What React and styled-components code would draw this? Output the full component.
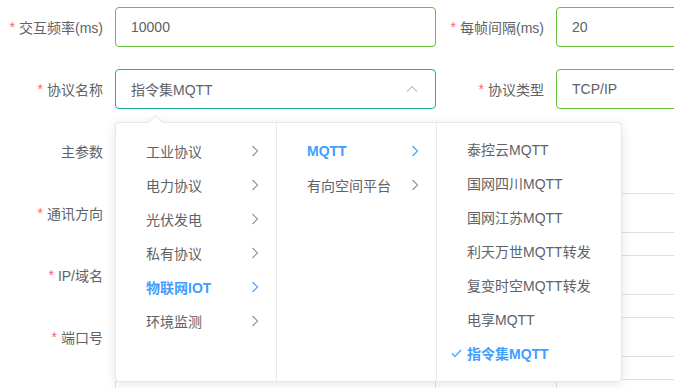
import React from 'react';
import styled, { createGlobalStyle } from 'styled-components';

const GlobalStyle = createGlobalStyle`
  html, body {
    margin: 0;
    padding: 0;
    background: #fff;
    overflow: hidden;
  }
  body {
    font-family: "Liberation Sans", "Noto Sans CJK SC", sans-serif;
    font-size: 14px;
    color: #606266;
  }
`;

const colors = {
  text: '#606266',
  success: '#67c23a',
  focus: '#1fb0a0',
  border: '#dcdfe6',
  primary: '#409eff',
  danger: '#f56c6c',
  icon: '#c0c4cc',
};

const rows = [
  {
    left: { label: '交互频率(ms)', required: true, value: '10000', state: 'success' },
    right: { label: '每帧间隔(ms)', required: true, value: '20', state: 'success' },
  },
  {
    left: { label: '协议名称', required: true, value: '指令集MQTT', state: 'focus', select: true },
    right: { label: '协议类型', required: true, value: 'TCP/IP', state: 'success' },
  },
  { left: { label: '主参数', value: '' } },
  { left: { label: '通讯方向', required: true, value: '' }, right: { label: '', value: '' } },
  { left: { label: 'IP/域名', required: true, value: '' }, right: { label: '', value: '' } },
  { left: { label: '端口号', required: true, value: '' }, right: { label: '', value: '' } },
  { left: { label: '', value: '' }, right: { label: '', value: '' } },
];

const menus = [
  {
    width: 161,
    padTop: 11,
    items: [
      { text: '工业协议', arrow: true },
      { text: '电力协议', arrow: true },
      { text: '光伏发电', arrow: true },
      { text: '私有协议', arrow: true },
      { text: '物联网IOT', arrow: true, active: true },
      { text: '环境监测', arrow: true },
    ],
  },
  {
    width: 160,
    padTop: 11,
    items: [
      { text: 'MQTT', arrow: true, active: true },
      { text: '有向空间平台', arrow: true },
    ],
  },
  {
    width: 184,
    padTop: 9,
    items: [
      { text: '泰控云MQTT' },
      { text: '国网四川MQTT' },
      { text: '国网江苏MQTT' },
      { text: '利天万世MQTT转发' },
      { text: '复变时空MQTT转发' },
      { text: '电享MQTT' },
      { text: '指令集MQTT', active: true, checked: true },
    ],
  },
];

const ChevronRight = ({ color }) => (
  <svg width="8" height="12" viewBox="0 0 8 12" fill="none">
    <path d="M1.5 1 L6.5 6 L1.5 11" stroke={color} strokeWidth="1.1" />
  </svg>
);

const ChevronUp = () => (
  <svg width="12" height="8" viewBox="0 0 12 8" fill="none">
    <path d="M1 6.5 L6 1.5 L11 6.5" stroke={colors.icon} strokeWidth="1.1" />
  </svg>
);

const Check = () => (
  <svg width="11" height="9" viewBox="0 0 11 9" fill="none">
    <path d="M1 4.5 L4 7.5 L10 1" stroke={colors.primary} strokeWidth="1.2" />
  </svg>
);

function Field({ item }) {
  if (!item) return <><Label /><span /></>;
  return (
    <>
      <Label>
        {item.required && <Star>*</Star>}
        {item.label}
      </Label>
      <InputWrap>
        <Input state={item.state}>
          <span>{item.value}</span>
          {item.select && <ChevronUp />}
        </Input>
        {item.select && <Cascader />}
      </InputWrap>
    </>
  );
}

function Cascader() {
  return (
    <Popper>
      <PopArrow />
      {menus.map((menu, i) => (
        <Menu key={i} width={menu.width} padTop={menu.padTop}>
          {menu.items.map(item => (
            <MenuItem key={item.text} active={item.active}>
              <CheckSlot>{item.checked && <Check />}</CheckSlot>
              <span className="label">{item.text}</span>
              {item.arrow && <ChevronRight color={item.active ? colors.primary : '#909399'} />}
            </MenuItem>
          ))}
        </Menu>
      ))}
    </Popper>
  );
}

export default function App() {
  return (
    <>
      <GlobalStyle />
      <Form>
        {rows.map((row, i) => (
          <React.Fragment key={i}>
            <Field item={row.left} />
            <Field item={row.right} />
          </React.Fragment>
        ))}
      </Form>
    </>
  );
}

const Form = styled.div`
  display: grid;
  grid-template-columns: 115px 321px 120px 321px;
  grid-auto-rows: 40px;
  row-gap: 22px;
  padding-top: 7px;
  width: 900px;
`;

const Label = styled.div`
  display: flex;
  align-items: center;
  justify-content: flex-end;
  padding-right: 12px;
  color: ${colors.text};
  font-size: 14px;
  white-space: nowrap;
`;

const Star = styled.span`
  color: ${colors.danger};
  margin-right: 4px;
`;

const InputWrap = styled.div`
  position: relative;
`;

const Input = styled.div`
  box-sizing: border-box;
  height: 40px;
  display: flex;
  align-items: center;
  justify-content: space-between;
  padding: 0 17px 0 15px;
  border: 1px solid
    ${p => (p.state === 'success' ? colors.success : p.state === 'focus' ? colors.focus : colors.border)};
  border-radius: 4px;
  color: ${colors.text};
  font-size: 14px;
`;

const Popper = styled.div`
  position: absolute;
  left: 0;
  top: 53px;
  z-index: 10;
  display: flex;
  height: 260px;
  background: #fff;
  border: 1px solid #e4e7ed;
  border-radius: 4px;
  box-shadow: 0 2px 12px 0 rgba(0, 0, 0, 0.1);
  box-sizing: border-box;
`;

const PopArrow = styled.div`
  position: absolute;
  top: -6px;
  left: 34px;
  width: 10px;
  height: 10px;
  background: #fff;
  border-left: 1px solid #e4e7ed;
  border-top: 1px solid #e4e7ed;
  transform: rotate(45deg);
`;

const Menu = styled.ul`
  list-style: none;
  margin: 0;
  padding: ${p => p.padTop}px 0 0;
  width: ${p => p.width}px;
  box-sizing: border-box;
  border-right: 1px solid #e4e7ed;

  &:last-child {
    border-right: none;
  }
`;

const MenuItem = styled.li`
  display: flex;
  align-items: center;
  height: 34px;
  padding: 0 17px 0 14px;
  font-size: 14px;
  color: ${p => (p.active ? colors.primary : colors.text)};
  font-weight: ${p => (p.active ? 700 : 400)};

  .label {
    flex: 1;
    white-space: nowrap;
  }
`;

const CheckSlot = styled.span`
  display: inline-flex;
  width: 16px;
`;
